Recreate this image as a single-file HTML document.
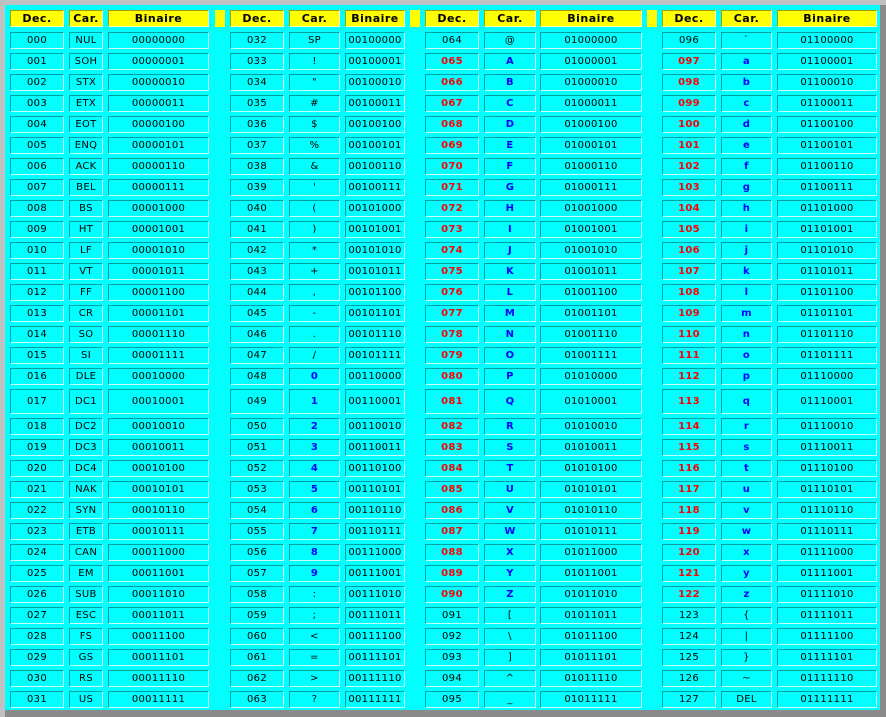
<!DOCTYPE html>
<html><head><meta charset="utf-8">
<style>
html,body{margin:0;padding:0}
body{width:886px;height:717px;background:#c0c0c0;position:relative;overflow:hidden;font-family:"DejaVu Sans","Liberation Sans",sans-serif}
#f{position:absolute;left:5px;top:5px;width:875px;height:705px;background:#00ffff;border-right:6px solid #8a8a8a;border-bottom:7px solid #8a8a8a;box-sizing:content-box}
#w{position:absolute;left:10px;top:10px}
.r{position:relative;height:17px;margin-bottom:4px}
.r.t{height:25px}
.h{margin-bottom:5px}
.r span{position:absolute;top:0;height:100%;box-sizing:border-box;border:1px solid;border-color:#00a0a0 #c8ffff #c8ffff #00a0a0;font-size:10px;letter-spacing:0.3px;color:#000;display:flex;align-items:center;justify-content:center;white-space:nowrap}
.r span:nth-child(1){left:0;width:54px}
.r span:nth-child(2){left:59px;width:34px}
.r span:nth-child(3){left:98px;width:101px}
.r span:nth-child(4){left:205px;width:10px;border:none}
.r span:nth-child(5){left:220px;width:54px}
.r span:nth-child(6){left:279px;width:51px}
.r span:nth-child(7){left:335px;width:60px}
.r span:nth-child(8){left:400px;width:10px;border:none}
.r span:nth-child(9){left:415px;width:54px}
.r span:nth-child(10){left:474px;width:52px}
.r span:nth-child(11){left:530px;width:102px}
.r span:nth-child(12){left:637px;width:10px;border:none}
.r span:nth-child(13){left:652px;width:54px}
.r span:nth-child(14){left:711px;width:51px}
.r span:nth-child(15){left:767px;width:100px}
.h span{background:#ffff00;font-weight:bold;font-size:11px;letter-spacing:0.5px;border-color:#a0a000 #ffffc0 #ffffc0 #a0a000}
.h span:nth-child(4),.h span:nth-child(8),.h span:nth-child(12){background:#ffff00}
.r span.x{color:#ff0000;font-weight:bold}
.r span.b{color:#0000ff;font-weight:bold}
</style></head><body>
<div id="f"></div>
<div id="w">
<div class="r h"><span>Dec.</span><span>Car.</span><span>Binaire</span><span></span><span>Dec.</span><span>Car.</span><span>Binaire</span><span></span><span>Dec.</span><span>Car.</span><span>Binaire</span><span></span><span>Dec.</span><span>Car.</span><span>Binaire</span></div>
<div class="r"><span>000</span><span>NUL</span><span>00000000</span><span></span><span>032</span><span>SP</span><span>00100000</span><span></span><span>064</span><span>@</span><span>01000000</span><span></span><span>096</span><span>`</span><span>01100000</span></div>
<div class="r"><span>001</span><span>SOH</span><span>00000001</span><span></span><span>033</span><span>!</span><span>00100001</span><span></span><span class="x">065</span><span class="b">A</span><span>01000001</span><span></span><span class="x">097</span><span class="b">a</span><span>01100001</span></div>
<div class="r"><span>002</span><span>STX</span><span>00000010</span><span></span><span>034</span><span>"</span><span>00100010</span><span></span><span class="x">066</span><span class="b">B</span><span>01000010</span><span></span><span class="x">098</span><span class="b">b</span><span>01100010</span></div>
<div class="r"><span>003</span><span>ETX</span><span>00000011</span><span></span><span>035</span><span>#</span><span>00100011</span><span></span><span class="x">067</span><span class="b">C</span><span>01000011</span><span></span><span class="x">099</span><span class="b">c</span><span>01100011</span></div>
<div class="r"><span>004</span><span>EOT</span><span>00000100</span><span></span><span>036</span><span>$</span><span>00100100</span><span></span><span class="x">068</span><span class="b">D</span><span>01000100</span><span></span><span class="x">100</span><span class="b">d</span><span>01100100</span></div>
<div class="r"><span>005</span><span>ENQ</span><span>00000101</span><span></span><span>037</span><span>%</span><span>00100101</span><span></span><span class="x">069</span><span class="b">E</span><span>01000101</span><span></span><span class="x">101</span><span class="b">e</span><span>01100101</span></div>
<div class="r"><span>006</span><span>ACK</span><span>00000110</span><span></span><span>038</span><span>&amp;</span><span>00100110</span><span></span><span class="x">070</span><span class="b">F</span><span>01000110</span><span></span><span class="x">102</span><span class="b">f</span><span>01100110</span></div>
<div class="r"><span>007</span><span>BEL</span><span>00000111</span><span></span><span>039</span><span>'</span><span>00100111</span><span></span><span class="x">071</span><span class="b">G</span><span>01000111</span><span></span><span class="x">103</span><span class="b">g</span><span>01100111</span></div>
<div class="r"><span>008</span><span>BS</span><span>00001000</span><span></span><span>040</span><span>(</span><span>00101000</span><span></span><span class="x">072</span><span class="b">H</span><span>01001000</span><span></span><span class="x">104</span><span class="b">h</span><span>01101000</span></div>
<div class="r"><span>009</span><span>HT</span><span>00001001</span><span></span><span>041</span><span>)</span><span>00101001</span><span></span><span class="x">073</span><span class="b">I</span><span>01001001</span><span></span><span class="x">105</span><span class="b">i</span><span>01101001</span></div>
<div class="r"><span>010</span><span>LF</span><span>00001010</span><span></span><span>042</span><span>*</span><span>00101010</span><span></span><span class="x">074</span><span class="b">J</span><span>01001010</span><span></span><span class="x">106</span><span class="b">j</span><span>01101010</span></div>
<div class="r"><span>011</span><span>VT</span><span>00001011</span><span></span><span>043</span><span>+</span><span>00101011</span><span></span><span class="x">075</span><span class="b">K</span><span>01001011</span><span></span><span class="x">107</span><span class="b">k</span><span>01101011</span></div>
<div class="r"><span>012</span><span>FF</span><span>00001100</span><span></span><span>044</span><span>,</span><span>00101100</span><span></span><span class="x">076</span><span class="b">L</span><span>01001100</span><span></span><span class="x">108</span><span class="b">l</span><span>01101100</span></div>
<div class="r"><span>013</span><span>CR</span><span>00001101</span><span></span><span>045</span><span>-</span><span>00101101</span><span></span><span class="x">077</span><span class="b">M</span><span>01001101</span><span></span><span class="x">109</span><span class="b">m</span><span>01101101</span></div>
<div class="r"><span>014</span><span>SO</span><span>00001110</span><span></span><span>046</span><span>.</span><span>00101110</span><span></span><span class="x">078</span><span class="b">N</span><span>01001110</span><span></span><span class="x">110</span><span class="b">n</span><span>01101110</span></div>
<div class="r"><span>015</span><span>SI</span><span>00001111</span><span></span><span>047</span><span>/</span><span>00101111</span><span></span><span class="x">079</span><span class="b">O</span><span>01001111</span><span></span><span class="x">111</span><span class="b">o</span><span>01101111</span></div>
<div class="r"><span>016</span><span>DLE</span><span>00010000</span><span></span><span>048</span><span class="b">0</span><span>00110000</span><span></span><span class="x">080</span><span class="b">P</span><span>01010000</span><span></span><span class="x">112</span><span class="b">p</span><span>01110000</span></div>
<div class="r t"><span>017</span><span>DC1</span><span>00010001</span><span></span><span>049</span><span class="b">1</span><span>00110001</span><span></span><span class="x">081</span><span class="b">Q</span><span>01010001</span><span></span><span class="x">113</span><span class="b">q</span><span>01110001</span></div>
<div class="r"><span>018</span><span>DC2</span><span>00010010</span><span></span><span>050</span><span class="b">2</span><span>00110010</span><span></span><span class="x">082</span><span class="b">R</span><span>01010010</span><span></span><span class="x">114</span><span class="b">r</span><span>01110010</span></div>
<div class="r"><span>019</span><span>DC3</span><span>00010011</span><span></span><span>051</span><span class="b">3</span><span>00110011</span><span></span><span class="x">083</span><span class="b">S</span><span>01010011</span><span></span><span class="x">115</span><span class="b">s</span><span>01110011</span></div>
<div class="r"><span>020</span><span>DC4</span><span>00010100</span><span></span><span>052</span><span class="b">4</span><span>00110100</span><span></span><span class="x">084</span><span class="b">T</span><span>01010100</span><span></span><span class="x">116</span><span class="b">t</span><span>01110100</span></div>
<div class="r"><span>021</span><span>NAK</span><span>00010101</span><span></span><span>053</span><span class="b">5</span><span>00110101</span><span></span><span class="x">085</span><span class="b">U</span><span>01010101</span><span></span><span class="x">117</span><span class="b">u</span><span>01110101</span></div>
<div class="r"><span>022</span><span>SYN</span><span>00010110</span><span></span><span>054</span><span class="b">6</span><span>00110110</span><span></span><span class="x">086</span><span class="b">V</span><span>01010110</span><span></span><span class="x">118</span><span class="b">v</span><span>01110110</span></div>
<div class="r"><span>023</span><span>ETB</span><span>00010111</span><span></span><span>055</span><span class="b">7</span><span>00110111</span><span></span><span class="x">087</span><span class="b">W</span><span>01010111</span><span></span><span class="x">119</span><span class="b">w</span><span>01110111</span></div>
<div class="r"><span>024</span><span>CAN</span><span>00011000</span><span></span><span>056</span><span class="b">8</span><span>00111000</span><span></span><span class="x">088</span><span class="b">X</span><span>01011000</span><span></span><span class="x">120</span><span class="b">x</span><span>01111000</span></div>
<div class="r"><span>025</span><span>EM</span><span>00011001</span><span></span><span>057</span><span class="b">9</span><span>00111001</span><span></span><span class="x">089</span><span class="b">Y</span><span>01011001</span><span></span><span class="x">121</span><span class="b">y</span><span>01111001</span></div>
<div class="r"><span>026</span><span>SUB</span><span>00011010</span><span></span><span>058</span><span>:</span><span>00111010</span><span></span><span class="x">090</span><span class="b">Z</span><span>01011010</span><span></span><span class="x">122</span><span class="b">z</span><span>01111010</span></div>
<div class="r"><span>027</span><span>ESC</span><span>00011011</span><span></span><span>059</span><span>;</span><span>00111011</span><span></span><span>091</span><span>[</span><span>01011011</span><span></span><span>123</span><span>{</span><span>01111011</span></div>
<div class="r"><span>028</span><span>FS</span><span>00011100</span><span></span><span>060</span><span>&lt;</span><span>00111100</span><span></span><span>092</span><span>\</span><span>01011100</span><span></span><span>124</span><span>|</span><span>01111100</span></div>
<div class="r"><span>029</span><span>GS</span><span>00011101</span><span></span><span>061</span><span>=</span><span>00111101</span><span></span><span>093</span><span>]</span><span>01011101</span><span></span><span>125</span><span>}</span><span>01111101</span></div>
<div class="r"><span>030</span><span>RS</span><span>00011110</span><span></span><span>062</span><span>&gt;</span><span>00111110</span><span></span><span>094</span><span>^</span><span>01011110</span><span></span><span>126</span><span>~</span><span>01111110</span></div>
<div class="r"><span>031</span><span>US</span><span>00011111</span><span></span><span>063</span><span>?</span><span>00111111</span><span></span><span>095</span><span>_</span><span>01011111</span><span></span><span>127</span><span>DEL</span><span>01111111</span></div>
</div>
</body></html>
